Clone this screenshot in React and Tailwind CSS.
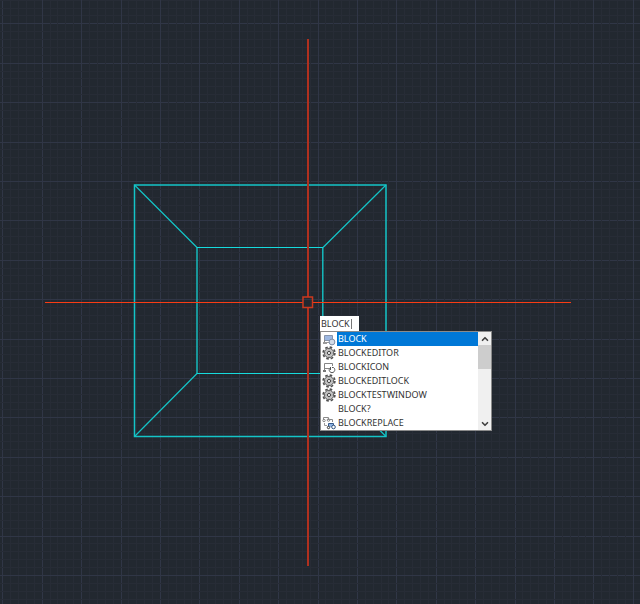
import { useState } from 'react'
import { ChevronDown, ChevronUp } from 'lucide-react'

const commands = [
  { name: 'BLOCK', icon: 'block' },
  { name: 'BLOCKEDITOR', icon: 'gear' },
  { name: 'BLOCKICON', icon: 'blockIcon' },
  { name: 'BLOCKEDITLOCK', icon: 'gear' },
  { name: 'BLOCKTESTWINDOW', icon: 'gear' },
  { name: 'BLOCK?', icon: null },
  { name: 'BLOCKREPLACE', icon: 'replace' },
]

const gridLines = Array.from({ length: 500 }, (_, i) => i)

function CommandIcon({ type }) {
  if (type === 'gear') {
    return (
      <svg className="size-[14px]" viewBox="0 0 14 14" fill="none" aria-hidden="true">
        <circle cx="7" cy="7" r="5.9" stroke="#505050" strokeWidth="1.6" strokeDasharray="2.6 2.03" />
        <circle cx="7" cy="7" r="4.7" fill="#c4c4c4" stroke="#5c5c5c" />
        <circle cx="7" cy="7" r="1.6" fill="#f4f4f4" stroke="#444444" />
        <path d="M7 3.4v1M7 9.6v1M3.4 7h1M9.6 7h1" stroke="#888888" />
      </svg>
    )
  }
  if (type === 'block') {
    return (
      <svg className="size-[14px]" viewBox="0 0 14 14" fill="none" aria-hidden="true">
        <path d="M2.5 3.5h8v5h-8z" fill="#9db8e2" stroke="#8795ad" />
        <path d="M2.5 8v3" stroke="#888888" />
        <path d="M1 10h4v2H1z" fill="#9a9a9a" />
        <path d="M5 10.5h3" stroke="#999999" />
        <circle cx="10" cy="10" r="2.9" fill="#d3dbe6" stroke="#7e8da5" />
      </svg>
    )
  }
  if (type === 'blockIcon') {
    return (
      <svg className="size-[14px]" viewBox="0 0 14 14" fill="none" aria-hidden="true">
        <path d="M2.5 10V3.5h8V6M3 8.5h4" stroke="#858585" />
        <path d="M1 10h3v2H1z" fill="#777777" />
        <path d="M8.5 7.5a2.8 2.8 0 1 0 3 0M8.5 7v3M11.5 7.5h-1.5" stroke="#555555" />
      </svg>
    )
  }
  if (type === 'replace') {
    return (
      <svg className="size-[14px]" viewBox="0 0 14 14" fill="none" aria-hidden="true">
        <path d="M1.5 4V1.5h5V4M8 3.5h2.5V6" stroke="#8a8a8a" />
        <circle cx="2" cy="4.5" r="1.2" stroke="#888888" />
        <circle cx="6.5" cy="4" r="1.3" stroke="#888888" />
        <path d="M6.5 11V7.5h5V11" fill="#8fb3e3" stroke="#365b8c" />
        <circle cx="6.5" cy="11.5" r="1.2" fill="#ffffff" stroke="#333333" />
        <circle cx="11.5" cy="11" r="1.8" fill="#ffffff" stroke="#31547f" />
        <path d="M2.5 7v2.5H5" stroke="#999999" />
      </svg>
    )
  }
  return null
}

function Drawing() {
  return (
    <svg className="absolute inset-0 size-full" fill="none" aria-hidden="true">
      {/* Grid, every fifth line is a major one */}
      {gridLines.map((i) => {
        const x = Math.floor(2.8 + i * 7.88) + 0.5
        const y = Math.floor(23.8 + (i - 5) * 7.88) + 0.5
        return (
          <g key={i} stroke={i % 5 === 0 ? '#303646' : '#272c36'}>
            <line x1={x} y1="0" x2={x} y2="100%" />
            <line x1="0" y1={y} x2="100%" y2={y} />
          </g>
        )
      })}

      {/* Block geometry */}
      <g stroke="#14c4c7">
        <path d="M134.5 185H386V436.5H134.5z" strokeWidth="1.5" />
        <path d="M197 247.5V373.5M322.8 247.5V373.5" strokeWidth="1.4" />
        <path d="M196.5 247.5H323M196.5 373.5H323" stroke="#16dadd" />
        <path d="M134.5 185L197 247.5M386 185L323 247.5M134.5 436.5L197 373.5M386 436.5L323 373.5" strokeWidth="1.2" />
      </g>

      {/* Crosshair */}
      <path d="M308 39V297M308 308V566" stroke="#b0301f" strokeWidth="2" />
      <path d="M45 302.5H303M313 302.5H571" stroke="#fa3c14" />
      <path d="M303 297h9.5v10.5h-9.5z" stroke="#cc381e" strokeWidth="1.5" />
    </svg>
  )
}

function App() {
  const [command, setCommand] = useState('BLOCK')
  const [selected, setSelected] = useState('BLOCK')

  const pick = (name) => {
    setSelected(name)
    setCommand(name)
  }

  return (
    <main className="relative min-h-screen overflow-hidden bg-[#222830] font-['Noto_Sans',sans-serif] text-[9px]">
      <Drawing />

      <div className="absolute left-[320px] top-[316px] w-[172px]">
        <div className="flex h-[15px] w-[39px] items-center bg-white pl-px">
          <input
            aria-label="Command"
            value={command}
            onChange={(e) => setCommand(e.target.value)}
            className="w-[30px] bg-transparent leading-[14px] text-[#333333] outline-none"
          />
          <span className="h-[10px] w-px bg-[#777777]" />
        </div>
        <div className="flex h-[100px] border border-[#8b8b8b] bg-white">
          <ul className="min-w-0 flex-1 overflow-hidden">
            {commands.map(({ name, icon }) => (
              <li key={name}>
                <button
                  onClick={() => pick(name)}
                  className="flex h-[14px] w-full items-center text-left leading-[14px] text-[#333333]"
                >
                  <span className="w-4 shrink-0 pl-px">
                    <CommandIcon type={icon} />
                  </span>
                  <span className={`h-[14px] flex-1 pl-px ${selected === name ? 'bg-[#0078d7] text-white' : ''}`}>
                    {name}
                  </span>
                </button>
              </li>
            ))}
          </ul>
          <div className="flex w-[13px] flex-col items-center bg-[#f0f0f0] text-[#404040]">
            <button aria-label="Scroll up" className="flex h-[13px] items-center">
              <ChevronUp className="size-[10px]" strokeWidth={4} />
            </button>
            <div className="h-6 w-full bg-[#cdcdcd]" />
            <button aria-label="Scroll down" className="mt-auto flex h-[13px] items-center">
              <ChevronDown className="size-[10px]" strokeWidth={4} />
            </button>
          </div>
        </div>
      </div>
    </main>
  )
}

export default App
